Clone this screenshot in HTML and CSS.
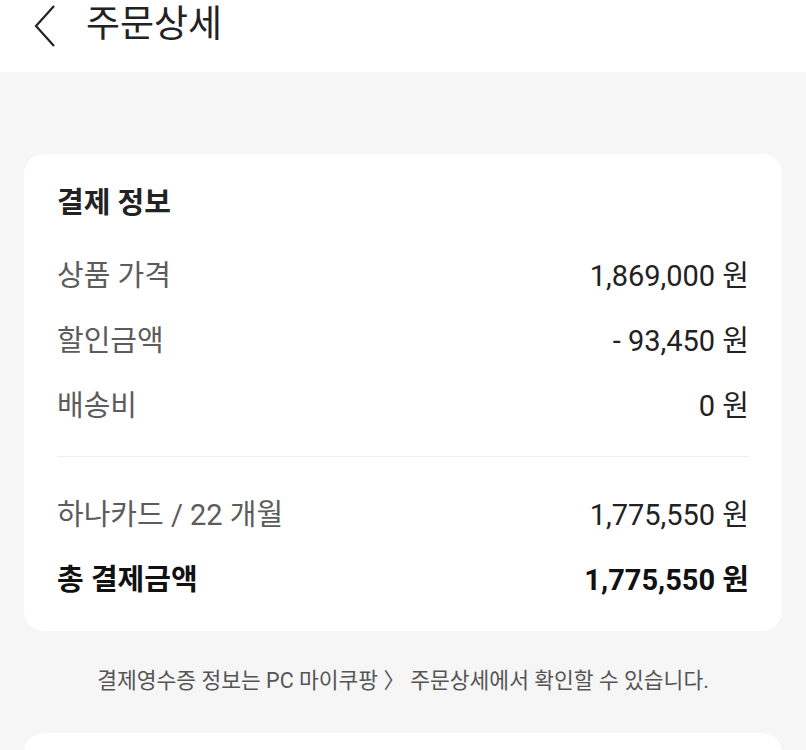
FILE: index.html
```html
<!DOCTYPE html>
<html lang="ko">
<head>
    <meta charset="UTF-8">
    <meta name="viewport" content="width=device-width, initial-scale=1.0">
    <title>주문상세</title>
    <link rel="stylesheet" href="styles.css">
</head>
<body>
    <header>
        <div class="bar">
            <a class="back" href="#">
                <svg width="24" height="44" viewBox="0 0 24 44">
                    <path d="M21 3 L3 23 L21 43" fill="none" stroke="#222" stroke-width="2.2"/>
                </svg>
            </a>
            <h1>주문상세</h1>
        </div>
    </header>

    <main>
        <section class="card">
            <h2>결제 정보</h2>
            <div class="row"><span class="label">상품 가격</span><span class="value">1,869,000 원</span></div>
            <div class="row"><span class="label">할인금액</span><span class="value">- 93,450 원</span></div>
            <div class="row"><span class="label">배송비</span><span class="value">0 원</span></div>
            <hr>
            <div class="row"><span class="label">하나카드 / 22 개월</span><span class="value">1,775,550 원</span></div>
            <div class="row total"><span class="label">총 결제금액</span><span class="value">1,775,550 원</span></div>
        </section>

        <p class="notice">결제영수증 정보는 PC 마이쿠팡 〉 주문상세에서 확인할 수 있습니다.</p>

        <section class="card next"></section>
    </main>
</body>
</html>
```

FILE: styles.css
```css
body {
    margin: 0;
    padding: 0;
    background-color: #f6f6f6;
    color: #222;
    font-family: Roboto, "Noto Sans CJK KR", sans-serif;
}
header {
    background-color: #fff;
    height: 72px;
}
header .bar {
    height: 50px;
    display: flex;
    align-items: center;
    padding-left: 33px;
}
header .back {
    display: flex;
    margin-right: 29px;
}
header h1 {
    margin: 0;
    font-size: 37px;
    font-weight: 400;
    line-height: 50px;
}
main {
    padding: 82px 24px 0;
}
.card {
    background-color: #fff;
    border-radius: 20px;
    padding: 29px 33px 22px;
}
.card h2 {
    margin: 0 0 17px;
    font-size: 29px;
    font-weight: 700;
    line-height: 40px;
}
.row {
    display: flex;
    justify-content: space-between;
    align-items: center;
    height: 65px;
    font-size: 29px;
}
.row .label {
    color: #5c5c5c;
}
.row .value {
    color: #222;
}
.row.total .label,
.row.total .value {
    color: #111;
    font-weight: 700;
}
hr {
    border: none;
    border-top: 1px solid #eeeeee;
    margin: 21px 0 22px;
}
.notice {
    margin: 35px 0 37px;
    text-align: center;
    font-size: 21.5px;
    line-height: 30px;
    color: #555;
}
.card.next {
    height: 40px;
    padding: 0;
}
```
